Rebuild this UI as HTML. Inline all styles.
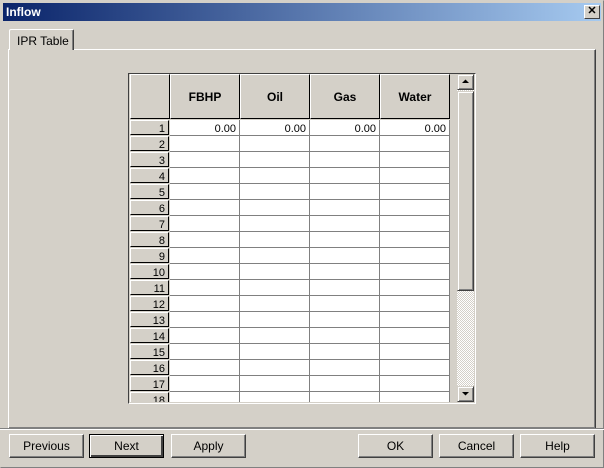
<!DOCTYPE html>
<html><head><style>
*{margin:0;padding:0;box-sizing:border-box}
body{width:604px;height:468px;background:#d4d0c8;font-family:"Liberation Sans",sans-serif;font-size:12px;position:relative;overflow:hidden}
.a{position:absolute}
.win{left:0;top:0;width:604px;height:468px;border:1px solid #808080;border-top-color:#d4d0c8;border-left-color:#d4d0c8}
.title{left:3px;top:3px;width:598px;height:18px;background:linear-gradient(90deg,#0a246a,#a6caf0);color:#fff;font-weight:bold;font-size:12px;line-height:18px;padding-left:3px}
.close{left:584px;top:5px;width:16px;height:14px;background:#d4d0c8;border:1px solid;border-color:#fff #404040 #404040 #fff;font-size:11px;line-height:11px;text-align:center;color:#000;font-weight:bold}
.panel{left:8px;top:49px;width:588px;height:380px;border:1px solid;border-color:#fff #404040 #404040 #fff;box-shadow:inset -1px -1px #808080}
.tab{left:9px;top:29px;width:65px;height:21px;border:1px solid;border-bottom:none;border-color:#fff #404040 #404040 #fff;border-radius:2px 2px 0 0;background:#d4d0c8;padding:4px 0 0 7px;box-shadow:inset -1px 0 #808080}
.grid{left:128px;top:73px;width:348px;height:331px;border:1px solid;border-color:#404040 #fff #fff #404040;background:#d4d0c8}
.hc{height:45px;top:74px;border:1px solid;border-color:#fff #000 #000 #fff;font-weight:bold;text-align:center;line-height:44px;font-size:12px;color:#000;background:#d4d0c8}
.cells{left:170px;top:120px;width:280px;height:282px;background:#fff;
background-image:repeating-linear-gradient(180deg,transparent 0 15px,#808080 15px 16px),repeating-linear-gradient(90deg,transparent 0 69px,#808080 69px 70px)}
.rh{left:130px;width:39px;height:15px;border:1px solid;border-color:#fff #000 #000 #fff;text-align:right;font-size:11px;line-height:17px;padding-right:3px;background:#d4d0c8;overflow:hidden}
.v{top:122px;width:69px;height:15px;text-align:right;padding-right:3px;font-size:11px;line-height:15px}
.sb{left:457px;top:74px;width:17px;height:328px;background-color:#eee;background-image:repeating-conic-gradient(#d4d0c8 0 25%,#fff 0 50%);background-size:2px 2px}
.sbt{width:17px;border:1px solid;border-color:#d4d0c8 #404040 #404040 #d4d0c8;background:#d4d0c8;box-shadow:inset 1px 1px #fff,inset -1px -1px #808080;left:457px}
.sep{left:0;top:428px;width:604px;height:2px;border-top:1px solid #808080;border-bottom:1px solid #fff}
.btn{top:434px;width:75px;height:24px;border:1px solid;border-color:#fff #404040 #404040 #fff;box-shadow:inset -1px -1px #808080;text-align:center;line-height:22px;font-size:12px}
</style></head><body>
<div class="a win"></div>
<div class="a title">Inflow</div>
<div class="a close">✕</div>
<div class="a panel"></div>
<div class="a tab">IPR Table</div>
<div class="a grid"></div>
<div class="a hc" style="left:130px;width:40px"></div>
<div class="a hc" style="left:170px;width:70px">FBHP</div>
<div class="a hc" style="left:240px;width:70px">Oil</div>
<div class="a hc" style="left:310px;width:70px">Gas</div>
<div class="a hc" style="left:380px;width:70px">Water</div>
<div class="a cells"></div>
<div class="a v" style="left:170px">0.00</div>
<div class="a v" style="left:240px">0.00</div>
<div class="a v" style="left:310px">0.00</div>
<div class="a v" style="left:380px">0.00</div>
<div class="a rh" style="top:120px">1</div>
<div class="a rh" style="top:136px">2</div>
<div class="a rh" style="top:152px">3</div>
<div class="a rh" style="top:168px">4</div>
<div class="a rh" style="top:184px">5</div>
<div class="a rh" style="top:200px">6</div>
<div class="a rh" style="top:216px">7</div>
<div class="a rh" style="top:232px">8</div>
<div class="a rh" style="top:248px">9</div>
<div class="a rh" style="top:264px">10</div>
<div class="a rh" style="top:280px">11</div>
<div class="a rh" style="top:296px">12</div>
<div class="a rh" style="top:312px">13</div>
<div class="a rh" style="top:328px">14</div>
<div class="a rh" style="top:344px">15</div>
<div class="a rh" style="top:360px">16</div>
<div class="a rh" style="top:376px">17</div>
<div class="a rh" style="top:392px;height:10px;border-bottom:none">18</div>
<div class="a sb"></div>
<div class="a sbt" style="top:74px;height:16px"><svg width="15" height="14" style="position:absolute;left:0;top:0"><path d="M4 8h7L7.5 4.5z" fill="#000"/></svg></div>
<div class="a sbt" style="top:91px;height:200px"></div>
<div class="a sbt" style="top:386px;height:16px"><svg width="15" height="14" style="position:absolute;left:0;top:0"><path d="M4 5h7L7.5 8.5z" fill="#000"/></svg></div>
<div class="a sep"></div>
<div class="a btn" style="left:9px">Previous</div>
<div class="a btn" style="left:89px;border:1px solid #000;box-shadow:inset 1px 1px #fff,inset -2px -2px #404040">Next</div>
<div class="a btn" style="left:171px">Apply</div>
<div class="a btn" style="left:358px">OK</div>
<div class="a btn" style="left:439px">Cancel</div>
<div class="a btn" style="left:520px">Help</div>
</body></html>
